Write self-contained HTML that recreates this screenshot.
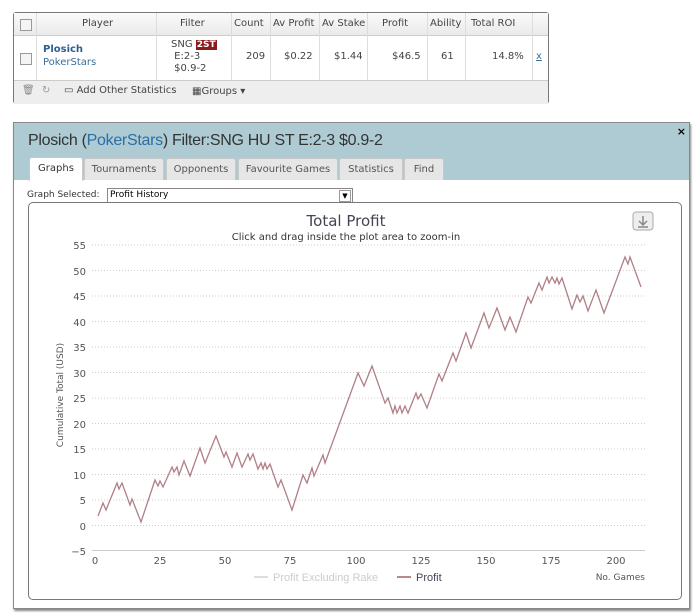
<!DOCTYPE html>
<html><head><meta charset="utf-8"><style>
body{margin:0;width:700px;height:616px;background:#fff;font-family:"DejaVu Sans","Liberation Sans",sans-serif;position:relative;overflow:hidden}
.abs{position:absolute}
.tb{left:13px;top:12px;width:534px;height:90px;border:1px solid #777;border-radius:3px;background:#fff;font-size:10px;color:#444}
.hd{left:0;top:0;width:534px;height:22px;background:linear-gradient(#fafafa,#eaeaea);border-bottom:1px solid #ccc}
.ft{left:0;top:67px;width:534px;height:23px;background:#eee;border-top:1px solid #ccc}
.vl{position:absolute;top:0;width:1px;height:67px;background:#ddd}
.cb{position:absolute;width:10px;height:10px;border:1px solid #999;background:#f4f4f4}
.dlg{left:13px;top:122px;width:675px;height:485px;border:1px solid #888;background:#fff;box-shadow:1px 2px 2px #888}
.top{left:0;top:0;width:675px;height:57px;background:#aecbd3}
.tab{position:absolute;top:35px;height:21px;background:#e6e6e6;border:1px solid #c8c8c8;border-bottom:none;font-size:10px;color:#555;text-align:center;line-height:21px;border-radius:3px 3px 0 0}
.chart{left:14px;top:79px;width:652px;height:396px;border:1px solid #777;border-radius:5px}
</style></head><body>
<div class="abs tb">
 <div class="abs hd"></div>
 <div class="vl" style="left:22px"></div><div class="vl" style="left:142px"></div><div class="vl" style="left:217px"></div><div class="vl" style="left:256px"></div><div class="vl" style="left:305px"></div><div class="vl" style="left:353px"></div><div class="vl" style="left:413px"></div><div class="vl" style="left:451px"></div><div class="vl" style="left:518px"></div>
 <div class="cb" style="left:6px;top:6px"></div><div class="cb" style="left:6px;top:40px"></div>
 <div class="abs" style="left:68px;top:5px">Player</div>
 <div class="abs" style="left:166px;top:5px">Filter</div>
 <div class="abs" style="left:220px;top:5px">Count</div>
 <div class="abs" style="left:259px;top:5px;width:44px;overflow:hidden;white-space:nowrap">Av Profit</div>
 <div class="abs" style="left:308px;top:5px;width:43px;overflow:hidden;white-space:nowrap">Av Stake</div>
 <div class="abs" style="left:368px;top:5px">Profit</div>
 <div class="abs" style="left:416px;top:5px;width:33px;overflow:hidden;white-space:nowrap">Ability</div>
 <div class="abs" style="left:457px;top:5px">Total ROI</div>
 <div class="abs" style="left:29px;top:31px;color:#2c5f8f;font-weight:bold">Plosich</div>
 <div class="abs" style="left:29px;top:44px;color:#3a6f9a">PokerStars</div>
 <div class="abs" style="left:157px;top:26px;line-height:12px">SNG <span style="background:#8b1a1a;color:#fff;font-weight:bold;font-size:9px;padding:0 1px">2ST</span><br>&nbsp;E:2-3<br>&nbsp;$0.9-2</div>
 <div class="abs" style="left:232px;top:38px">209</div>
 <div class="abs" style="left:270px;top:38px">$0.22</div>
 <div class="abs" style="left:320px;top:38px">$1.44</div>
 <div class="abs" style="left:378px;top:38px">$46.5</div>
 <div class="abs" style="left:427px;top:38px">61</div>
 <div class="abs" style="left:478px;top:38px">14.8%</div>
 <div class="abs" style="left:522px;top:38px;color:#3a6f9a;text-decoration:underline">x</div>
 <div class="abs ft"><span class="abs" style="left:8px;top:4px;color:#888">🗑</span><span class="abs" style="left:28px;top:4px;color:#999">↻</span><span class="abs" style="left:50px;top:4px">▭ Add Other Statistics</span><span class="abs" style="left:178px;top:5px">▦Groups ▾</span></div>
</div>
<div class="abs dlg">
 <div class="abs top"></div>
 <div class="abs" style="left:14px;top:9px;font-family:'Liberation Sans Narrow','Liberation Sans',sans-serif;font-size:16px;color:#333;letter-spacing:-0.3px">Plosich (<span style="color:#2b6ea5">PokerStars</span>) Filter:SNG HU ST E:2-3 $0.9-2</div>
 <div class="abs" style="right:3px;top:2px;font-size:11px;font-weight:bold">×</div>
 <div class="tab" style="left:15px;width:52px;background:#fff;top:34px;height:23px;color:#333">Graphs</div>
 <div class="tab" style="left:70px;width:78px">Tournaments</div>
 <div class="tab" style="left:152px;width:68px">Opponents</div>
 <div class="tab" style="left:224px;width:98px">Favourite Games</div>
 <div class="tab" style="left:325px;width:62px">Statistics</div>
 <div class="tab" style="left:390px;width:38px">Find</div>
 <div class="abs" style="left:13px;top:67px;font-size:9px;color:#333">Graph Selected:</div>
 <div class="abs" style="left:93px;top:65px;width:242px;height:13px;border:1px solid #888;font-size:9px;line-height:13px;padding-left:2px">Profit History<span class="abs" style="right:1px;top:1px;width:10px;height:10px;border:1px solid #999;font-size:7px;line-height:10px;text-align:center">▼</span></div>
 <div class="abs chart"></div>
</div>
<svg class="abs" style="left:0;top:0" width="700" height="616">
 <g font-family="DejaVu Sans,sans-serif" font-size="10" fill="#555" text-anchor="end">
  <text x="86" y="249">55</text><text x="86" y="275">50</text><text x="86" y="300">45</text><text x="86" y="326">40</text><text x="86" y="351">35</text><text x="86" y="377">30</text><text x="86" y="402">25</text><text x="86" y="428">20</text><text x="86" y="453">15</text><text x="86" y="479">10</text><text x="86" y="504">5</text><text x="86" y="530">0</text><text x="86" y="555">−5</text>
 </g>
 <g stroke="#ccc" stroke-dasharray="1,2">
  <line x1="92" y1="245" x2="645" y2="245"/><line x1="92" y1="270.5" x2="645" y2="270.5"/><line x1="92" y1="296" x2="645" y2="296"/><line x1="92" y1="321.5" x2="645" y2="321.5"/><line x1="92" y1="347" x2="645" y2="347"/><line x1="92" y1="372.5" x2="645" y2="372.5"/><line x1="92" y1="398" x2="645" y2="398"/><line x1="92" y1="423.5" x2="645" y2="423.5"/><line x1="92" y1="449" x2="645" y2="449"/><line x1="92" y1="474.5" x2="645" y2="474.5"/><line x1="92" y1="500" x2="645" y2="500"/><line x1="92" y1="525.5" x2="645" y2="525.5"/>
 </g>
 <line x1="92" y1="550.5" x2="645" y2="550.5" stroke="#ccc"/>
 <g font-family="DejaVu Sans,sans-serif" font-size="10" fill="#555" text-anchor="middle">
  <text x="95" y="564">0</text><text x="160" y="564">25</text><text x="225" y="564">50</text><text x="290" y="564">75</text><text x="356" y="564">100</text><text x="421" y="564">125</text><text x="486" y="564">150</text><text x="551" y="564">175</text><text x="616" y="564">200</text>
  <text x="346" y="226" font-size="15" fill="#445">Total Profit</text>
  <text x="346" y="240" font-size="10" fill="#333">Click and drag inside the plot area to zoom-in</text>
 </g>
 <text transform="translate(63,395) rotate(-90)" text-anchor="middle" font-family="DejaVu Sans,sans-serif" font-size="9" fill="#555">Cumulative Total (USD)</text>
 <text x="645" y="580" text-anchor="end" font-family="DejaVu Sans,sans-serif" font-size="9" fill="#555">No. Games</text>
 <line x1="254" y1="577" x2="268" y2="577" stroke="#ddd" stroke-width="2"/>
 <text x="273" y="581" font-family="Liberation Sans Narrow,Liberation Sans,sans-serif" font-size="11" fill="#ccc">Profit Excluding Rake</text>
 <line x1="397" y1="577" x2="411" y2="577" stroke="#b88" stroke-width="2"/>
 <text x="416" y="581" font-family="Liberation Sans Narrow,Liberation Sans,sans-serif" font-size="11" fill="#445">Profit</text>
 <rect x="633" y="212" width="20" height="18" rx="3" fill="#eee" stroke="#aaa"/>
 <path d="M643 216v8M639 221l4 4 4-4M638 227h10" stroke="#888" fill="none" stroke-width="1.5"/>
 <polyline fill="none" stroke="#b07f85" stroke-width="1.3" points="98,516 103,503 106,510 117,483 119,489 122,483 130,505 132,499 141,522 155,480 158,486 160,481 163,487 172,467 174,472 177,467 179,475 184,461 190,476 200,448 205,463 216,436 224,457 226,452 232,467 237,453 242,467 248,454 250,460 253,454 258,469 261,463 263,469 265,463 267,469 270,464 278,487 281,480 292,510 303,475 307,483 312,468 314,476 323,455 325,463 358,373 364,386 372,366 385,403 388,398 393,413 395,406 397,413 400,406 402,413 405,406 408,413 416,393 418,399 421,394 427,408 439,374 442,381 453,353 456,361 466,333 471,348 484,313 489,328 497,308 505,330 510,317 516,332 528,297 531,303 539,283 542,290 547,277 549,283 552,277 555,283 557,278 559,284 562,278 572,309 577,295 580,302 583,296 588,311 596,290 604,313 625,257 628,264 630,257 641,287"/>
</svg>
</body></html>
